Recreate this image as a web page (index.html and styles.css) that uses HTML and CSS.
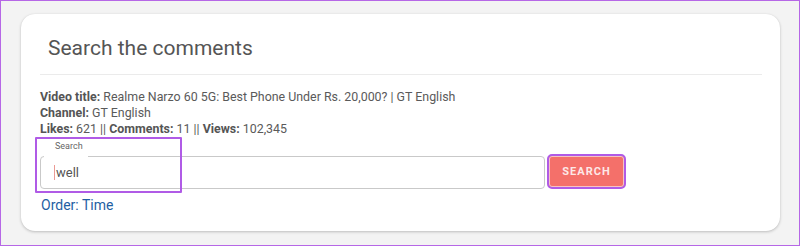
FILE: index.html
```html
<!DOCTYPE html>
<html lang="en">
<head>
<meta charset="utf-8">
<title>Search the comments</title>
<link rel="stylesheet" href="styles.css">
</head>
<body>
<div class="frame">
  <div class="card">
    <h2 class="title">Search the comments</h2>
    <div class="divider"></div>
    <div class="meta">
      <div><b>Video title:</b> Realme Narzo 60 5G: Best Phone Under Rs. 20,000? | GT English</div>
      <div><b>Channel:</b> GT English</div>
      <div><b>Likes:</b> 621 || <b>Comments:</b> 11 || <b>Views:</b> 102,345</div>
    </div>
    <div class="search-row">
      <div class="field">
        <span class="label">Search</span>
        <div class="input"><span class="caret"></span>well</div>
        <span class="notch"></span>
        <div class="highlight"></div>
      </div>
      <button class="btn">SEARCH</button>
    </div>
    <a class="order">Order: Time</a>
  </div>
</div>
</body>
</html>
```
FILE: styles.css
```css
html, body {
  margin: 0;
  padding: 0;
  height: 246px;
  overflow: hidden;
}
body {
  font-family: Roboto, "Liberation Sans", sans-serif;
  background: #f3f3f3;
}
.frame {
  box-sizing: border-box;
  height: 246px;
  border: 1px solid #b667e6;
  padding: 13px 19px 0 20px;
}
.card {
  box-sizing: border-box;
  height: 217px;
  background: #fff;
  border-radius: 14px;
  box-shadow: 0 1px 3px rgba(0,0,0,0.22), 0 0 1px rgba(0,0,0,0.08);
  padding: 20px 18px 0 19px;
}
.title {
  margin: 0;
  padding-left: 8px;
  font-size: 21px;
  font-weight: 400;
  color: #555;
  line-height: 28px;
}
.divider {
  height: 1px;
  background: #ebebeb;
  margin-top: 12px;
}
.meta {
  margin-top: 14px;
  font-size: 12.4px;
  line-height: 16px;
  color: #5a5a5a;
}
.meta b {
  font-weight: 700;
  color: #555;
}
.search-row {
  display: flex;
  align-items: flex-start;
  gap: 2px;
}
.field {
  position: relative;
  width: 505px;
  padding-top: 19px;
}
.input {
  box-sizing: border-box;
  height: 33px;
  border: 1px solid #c9c9c9;
  border-radius: 4px;
  padding-left: 14px;
  font-size: 13px;
  line-height: 31px;
  color: #555;
  display: flex;
  align-items: center;
}
.caret {
  display: inline-block;
  width: 1px;
  height: 15px;
  background: #eb9a94;
  margin-left: -1px;
  margin-right: 1px;
}
.notch {
  position: absolute;
  left: 4px;
  top: 18px;
  width: 44px;
  height: 3px;
  background: #fff;
}
.label {
  position: absolute;
  left: 15px;
  top: 3px;
  font-size: 9px;
  line-height: 12px;
  color: #666;
}
.highlight {
  position: absolute;
  left: -5px;
  top: 0;
  width: 143px;
  height: 52px;
  border: 2px solid #b05be6;
  border-radius: 1px;
}
.btn {
  box-sizing: border-box;
  width: 79px;
  height: 35px;
  margin-top: 17px;
  background: #f4706a;
  border: 2px solid #b05be6;
  border-radius: 5px;
  box-shadow: inset 0 0 0 1px #f6c3c0;
  color: #fde8e7;
  font-family: Roboto, "Liberation Sans", sans-serif;
  font-size: 11px;
  font-weight: 700;
  letter-spacing: 1px;
  padding: 0;
}
.order {
  display: inline-block;
  margin-top: 7px;
  margin-left: 1px;
  font-size: 14px;
  line-height: 18px;
  color: #1f5fa3;
}
```
